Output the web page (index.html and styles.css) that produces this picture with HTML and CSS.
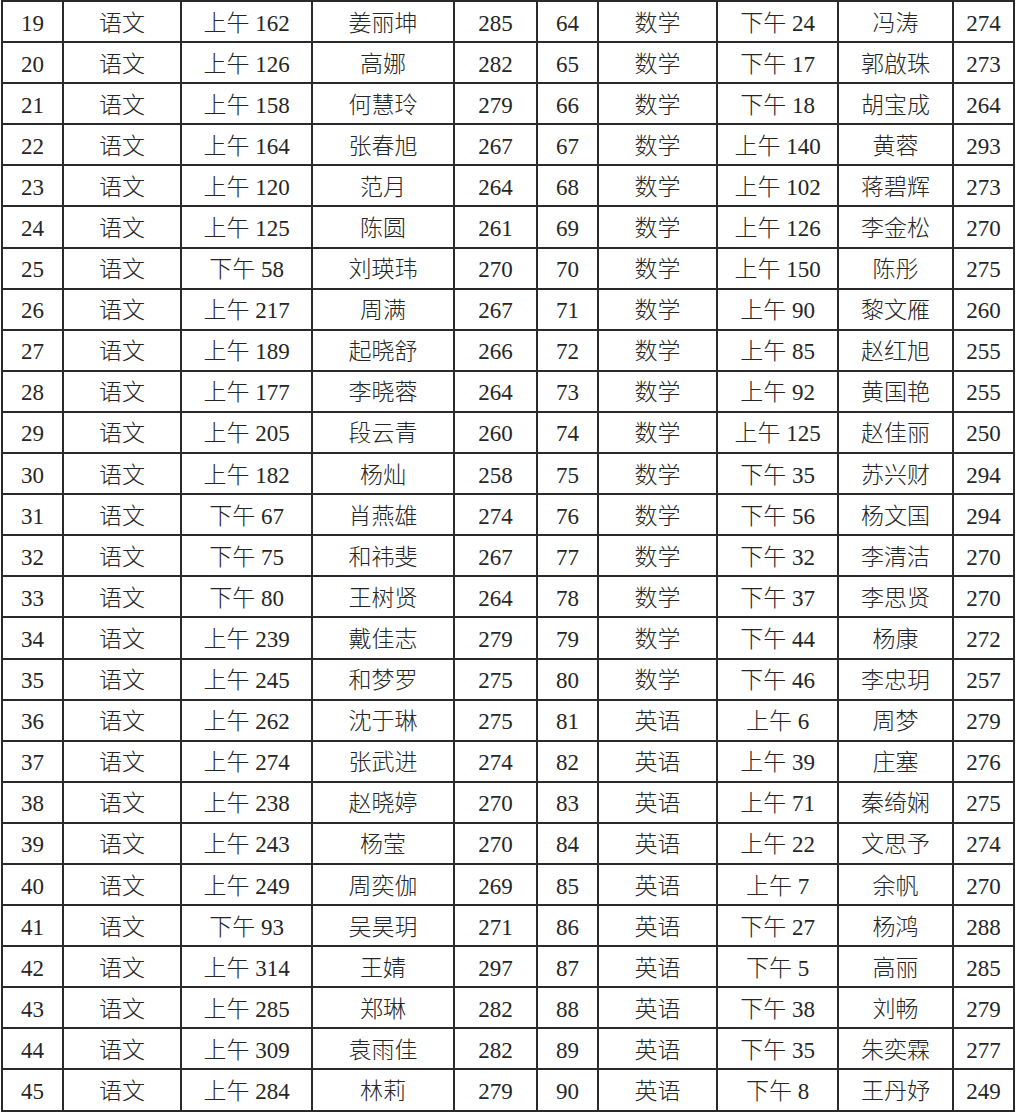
FILE: index.html
```html
<!DOCTYPE html>
<html lang="zh-CN">
<head>
<meta charset="utf-8">
<title>考场安排</title>
<link rel="stylesheet" href="styles.css">
</head>
<body>
<table class="sheet">
<colgroup>
<col class="c-no"><col class="c-subj"><col class="c-time"><col class="c-name"><col class="c-score">
<col class="c-no"><col class="c-subj2"><col class="c-time2"><col class="c-name2"><col class="c-no">
</colgroup>
<tbody>
<tr><td>19</td><td>语文</td><td>上午 162</td><td>姜丽坤</td><td>285</td><td>64</td><td>数学</td><td>下午 24</td><td>冯涛</td><td>274</td></tr>
<tr><td>20</td><td>语文</td><td>上午 126</td><td>高娜</td><td>282</td><td>65</td><td>数学</td><td>下午 17</td><td>郭啟珠</td><td>273</td></tr>
<tr><td>21</td><td>语文</td><td>上午 158</td><td>何慧玲</td><td>279</td><td>66</td><td>数学</td><td>下午 18</td><td>胡宝成</td><td>264</td></tr>
<tr><td>22</td><td>语文</td><td>上午 164</td><td>张春旭</td><td>267</td><td>67</td><td>数学</td><td>上午 140</td><td>黄蓉</td><td>293</td></tr>
<tr><td>23</td><td>语文</td><td>上午 120</td><td>范月</td><td>264</td><td>68</td><td>数学</td><td>上午 102</td><td>蒋碧辉</td><td>273</td></tr>
<tr><td>24</td><td>语文</td><td>上午 125</td><td>陈圆</td><td>261</td><td>69</td><td>数学</td><td>上午 126</td><td>李金松</td><td>270</td></tr>
<tr><td>25</td><td>语文</td><td>下午 58</td><td>刘瑛玮</td><td>270</td><td>70</td><td>数学</td><td>上午 150</td><td>陈彤</td><td>275</td></tr>
<tr><td>26</td><td>语文</td><td>上午 217</td><td>周满</td><td>267</td><td>71</td><td>数学</td><td>上午 90</td><td>黎文雁</td><td>260</td></tr>
<tr><td>27</td><td>语文</td><td>上午 189</td><td>起晓舒</td><td>266</td><td>72</td><td>数学</td><td>上午 85</td><td>赵红旭</td><td>255</td></tr>
<tr><td>28</td><td>语文</td><td>上午 177</td><td>李晓蓉</td><td>264</td><td>73</td><td>数学</td><td>上午 92</td><td>黄国艳</td><td>255</td></tr>
<tr><td>29</td><td>语文</td><td>上午 205</td><td>段云青</td><td>260</td><td>74</td><td>数学</td><td>上午 125</td><td>赵佳丽</td><td>250</td></tr>
<tr><td>30</td><td>语文</td><td>上午 182</td><td>杨灿</td><td>258</td><td>75</td><td>数学</td><td>下午 35</td><td>苏兴财</td><td>294</td></tr>
<tr><td>31</td><td>语文</td><td>下午 67</td><td>肖燕雄</td><td>274</td><td>76</td><td>数学</td><td>下午 56</td><td>杨文国</td><td>294</td></tr>
<tr><td>32</td><td>语文</td><td>下午 75</td><td>和祎斐</td><td>267</td><td>77</td><td>数学</td><td>下午 32</td><td>李清洁</td><td>270</td></tr>
<tr><td>33</td><td>语文</td><td>下午 80</td><td>王树贤</td><td>264</td><td>78</td><td>数学</td><td>下午 37</td><td>李思贤</td><td>270</td></tr>
<tr><td>34</td><td>语文</td><td>上午 239</td><td>戴佳志</td><td>279</td><td>79</td><td>数学</td><td>下午 44</td><td>杨康</td><td>272</td></tr>
<tr><td>35</td><td>语文</td><td>上午 245</td><td>和梦罗</td><td>275</td><td>80</td><td>数学</td><td>下午 46</td><td>李忠玥</td><td>257</td></tr>
<tr><td>36</td><td>语文</td><td>上午 262</td><td>沈于琳</td><td>275</td><td>81</td><td>英语</td><td>上午 6</td><td>周梦</td><td>279</td></tr>
<tr><td>37</td><td>语文</td><td>上午 274</td><td>张武进</td><td>274</td><td>82</td><td>英语</td><td>上午 39</td><td>庄塞</td><td>276</td></tr>
<tr><td>38</td><td>语文</td><td>上午 238</td><td>赵晓婷</td><td>270</td><td>83</td><td>英语</td><td>上午 71</td><td>秦绮娴</td><td>275</td></tr>
<tr><td>39</td><td>语文</td><td>上午 243</td><td>杨莹</td><td>270</td><td>84</td><td>英语</td><td>上午 22</td><td>文思予</td><td>274</td></tr>
<tr><td>40</td><td>语文</td><td>上午 249</td><td>周奕伽</td><td>269</td><td>85</td><td>英语</td><td>上午 7</td><td>余帆</td><td>270</td></tr>
<tr><td>41</td><td>语文</td><td>下午 93</td><td>吴昊玥</td><td>271</td><td>86</td><td>英语</td><td>下午 27</td><td>杨鸿</td><td>288</td></tr>
<tr><td>42</td><td>语文</td><td>上午 314</td><td>王婧</td><td>297</td><td>87</td><td>英语</td><td>下午 5</td><td>高丽</td><td>285</td></tr>
<tr><td>43</td><td>语文</td><td>上午 285</td><td>郑琳</td><td>282</td><td>88</td><td>英语</td><td>下午 38</td><td>刘畅</td><td>279</td></tr>
<tr><td>44</td><td>语文</td><td>上午 309</td><td>袁雨佳</td><td>282</td><td>89</td><td>英语</td><td>下午 35</td><td>朱奕霖</td><td>277</td></tr>
<tr><td>45</td><td>语文</td><td>上午 284</td><td>林莉</td><td>279</td><td>90</td><td>英语</td><td>下午 8</td><td>王丹妤</td><td>249</td></tr>
</tbody>
</table>
</body>
</html>
```
FILE: styles.css
```css
html, body {
  margin: 0;
  padding: 0;
  background: #ffffff;
}

body {
  padding: 0 0 0 1px;
}

.sheet {
  border-collapse: collapse;
  table-layout: fixed;
  width: 1014px;
  font-family: "Liberation Serif", "Noto Sans CJK SC", serif;
  font-size: 23px;
  font-weight: 300;
  color: #262626;
}

.c-no { width: 61px; }
.c-subj { width: 118px; }
.c-time { width: 131px; }
.c-name { width: 142px; }
.c-score { width: 83px; }
.c-subj2 { width: 119px; }
.c-time2 { width: 121px; }
.c-name2 { width: 115px; }

.sheet tr {
  height: 41.1px;
}

.sheet td {
  border: 2px solid #2a2a2a;
  padding: 3px 0 0 0;
  text-align: center;
  vertical-align: middle;
  line-height: 1;
  white-space: nowrap;
}
```
